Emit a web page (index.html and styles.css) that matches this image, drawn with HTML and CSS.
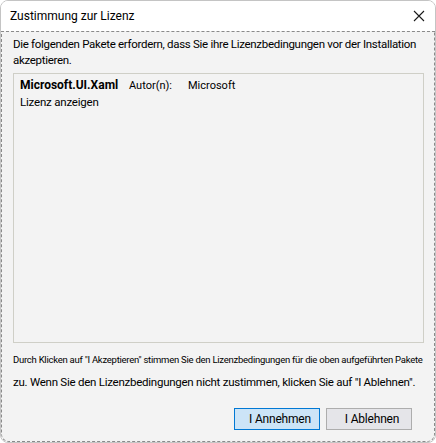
FILE: index.html
```html
<!DOCTYPE html>
<html lang="de">
<head>
  <meta charset="UTF-8" />
  <title>Zustimmung zur Lizenz</title>
  <link rel="stylesheet" href="styles.css">
</head>
<body>
  <div class="window">
    <!-- Titelleiste -->
    <div class="titlebar">
      <span class="title">Zustimmung zur Lizenz</span>
      <svg class="close" width="12" height="12" viewBox="0 0 12 12">
        <path d="M1 1 L11 11 M11 1 L1 11" stroke="#1a1a1a" stroke-width="1.1" fill="none" />
      </svg>
    </div>

    <div class="content">
      <p class="intro">Die folgenden Pakete erfordern, dass Sie ihre Lizenzbedingungen vor der Installation<br>akzeptieren.</p>

      <!-- Paketliste -->
      <div class="package-list">
        <div class="package">
          <div class="package-head">
            <span class="package-name">Microsoft.UI.Xaml</span>
            <span class="package-label">Autor(n):</span>
            <span class="package-author">Microsoft</span>
          </div>
          <div class="package-link">Lizenz anzeigen</div>
        </div>
      </div>

      <p class="note-small">Durch Klicken auf "I Akzeptieren" stimmen Sie den Lizenzbedingungen für die oben aufgeführten Pakete</p>
      <p class="note">zu. Wenn Sie den Lizenzbedingungen nicht zustimmen, klicken Sie auf "I Ablehnen".</p>

      <div class="buttons">
        <button class="btn btn-primary">I Annehmen</button>
        <button class="btn">I Ablehnen</button>
      </div>
    </div>
  </div>
</body>
</html>
```

FILE: styles.css
```css
body {
  margin: 0;
  background-color: #fff;
  font-family: Roboto, "Liberation Sans", Arial, sans-serif;
  font-size: 12px;
  color: #000;
}

/* Fenster */
.window {
  height: 443px;
  box-sizing: border-box;
  border: 1px solid #c4c4c4;
  border-radius: 8px;
  display: flex;
  flex-direction: column;
  overflow: hidden;
}

.titlebar {
  height: 30px;
  flex-shrink: 0;
  display: flex;
  align-items: center;
  justify-content: space-between;
  padding: 0 10px 0 9px;
  background-color: #fff;
}

.title {
  font-size: 12px;
}

.close {
  display: block;
}

/* Inhalt */
.content {
  flex: 1;
  display: flex;
  flex-direction: column;
  border: 1px dashed #8a8a8a;
  border-radius: 0 0 8px 8px;
  background-color: #f3f3f3;
  padding: 4px 10px 10px 11px;
}

.intro {
  margin: 0;
  font-size: 11.5px;
  line-height: 16px;
  white-space: nowrap;
  letter-spacing: -0.3px;
}

.package-list {
  margin-top: 5px;
  height: 270px;
  box-sizing: border-box;
  border: 1px solid #cfcfc7;
  padding: 3px 6px;
}

.package-head {
  display: flex;
  align-items: baseline;
  line-height: 16px;
}

.package-name {
  font-weight: bold;
  font-size: 12px;
  width: 109px;
}

.package-label {
  font-size: 11px;
  width: 59px;
}

.package-author {
  font-size: 11px;
}

.package-link {
  font-size: 11.5px;
  line-height: 16px;
  letter-spacing: -0.2px;
}

.note-small {
  margin: 9px 0 0;
  font-size: 9.5px;
  line-height: 16px;
  white-space: nowrap;
  letter-spacing: -0.25px;
}

.note {
  margin: 6px 0 0;
  font-size: 11.5px;
  line-height: 16px;
  white-space: nowrap;
  letter-spacing: -0.25px;
}

/* Schaltflächen */
.buttons {
  margin-top: auto;
  display: flex;
  justify-content: flex-end;
  gap: 6px;
  padding-right: 12px;
  padding-bottom: 1px;
}

.btn {
  width: 86px;
  height: 22px;
  font-family: inherit;
  font-size: 12px;
  letter-spacing: -0.2px;
  background-color: #e5e5e9;
  border: 1px solid #adadad;
  padding: 0 0 0 6px;
  color: #000;
}

.btn-primary {
  background-color: #cce4f7;
  border-color: #0078d4;
}
```
